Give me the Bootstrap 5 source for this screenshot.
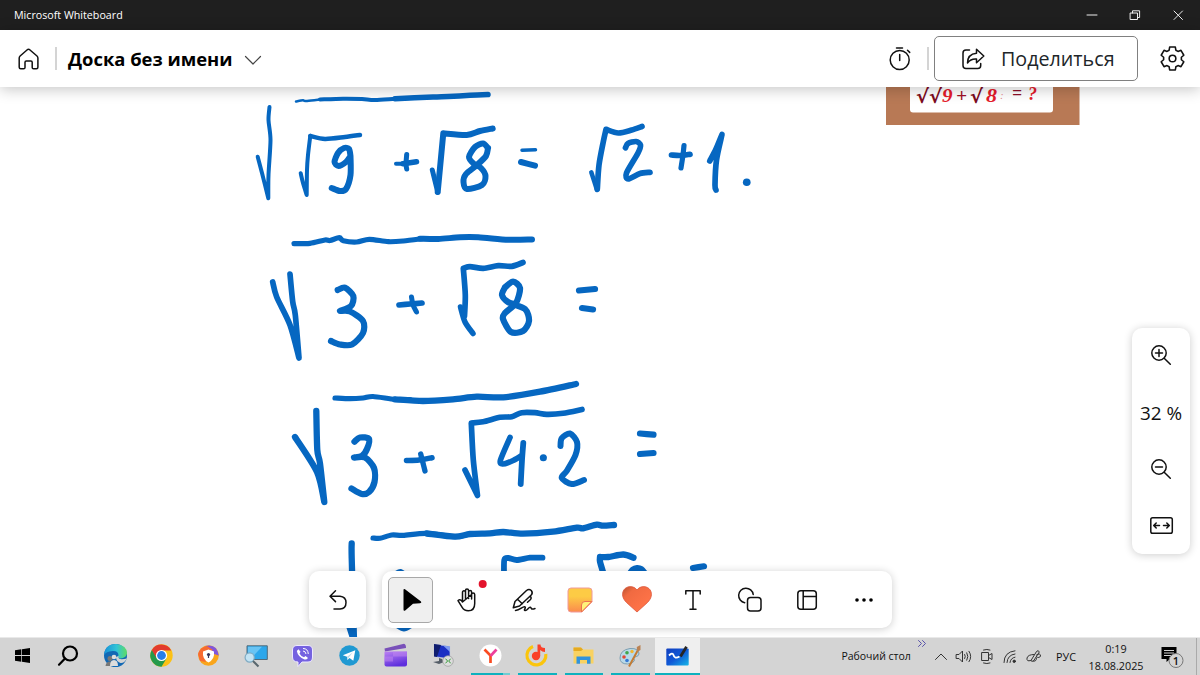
<!DOCTYPE html>
<html lang="ru">
<head>
    <meta charset="UTF-8">
    <meta name="viewport" content="width=device-width, initial-scale=1.0">
    <title>Microsoft Whiteboard</title>

    <!-- Bootstrap CSS -->
    <link rel="stylesheet" href="https://cdn.jsdelivr.net/npm/bootstrap@5.3.0/dist/css/bootstrap.min.css">

    <style>
        body {
            height: 100vh;
            font-family: "Segoe UI", "Open Sans", "Noto Sans", sans-serif;
            color: #111;
            background: #fff;
        }

        svg {
            display: block;
            flex: none;
            overflow: visible;
        }

        .ico {
            fill: none;
            stroke: #111;
            stroke-width: 1.5;
            stroke-linecap: round;
            stroke-linejoin: round;
        }

        .ico-heavy {
            stroke: #000;
            stroke-width: 2.2;
        }

        .title-bar {
            height: 30px;
            background: #1f1f1f;
            color: #fff;
            font-size: 10.7px;
            padding: 0 17px 0 14px;
        }

        .title-bar .ico {
            stroke: #eee;
            stroke-width: 1;
        }

        .win-buttons {
            gap: 33px;
        }

        .board-header {
            height: 57px;
            background: #fff;
            padding: 0 15px 0 18px;
            box-shadow: 0 2px 14px rgba(0, 0, 0, 0.24);
            z-index: 2;
        }

        .divider {
            width: 2px;
            height: 23px;
            background: #d4d4d4;
        }

        .divider-left {
            margin-left: 15px;
        }

        .board-name {
            font-size: 18.4px;
            font-weight: 700;
            color: #000;
            margin: 0 12px 0 11px;
            width: 165px;
            white-space: nowrap;
        }

        .header-caret {
            stroke: #444;
            stroke-width: 1.2;
        }

        .btn-share {
            width: 204px;
            height: 45px;
            border: 1px solid #808080;
            border-radius: 5px;
            font-size: 19.7px;
            padding: 0 0 0 26px;
            margin: 0 22px 0 5px;
            gap: 16px;
        }

        .panel {
            background: #fff;
            border-radius: 10px;
            box-shadow: 0 1px 8px rgba(0, 0, 0, 0.2);
        }

        .tools {
            left: 309px;
            bottom: 9px;
            height: 57px;
            gap: 16px;
        }

        .undo-panel {
            width: 57px;
        }

        .tool-panel {
            width: 510px;
        }

        .tool {
            flex: 1 1 0;
            display: flex;
            align-items: center;
            justify-content: center;
        }

        .tool-active {
            width: 45px;
            height: 46px;
            padding-left: 4px;
            background: #efefef;
            border: 1px solid #a8a8a8;
            border-radius: 5px;
        }

        .zoom-panel {
            right: 10px;
            top: 241px;
            width: 58px;
            height: 226px;
            padding-top: 17px;
            font-size: 18.9px;
            line-height: 27px;
        }

        .zoom-value {
            margin: 35px 0 32px;
        }

        .zoom-fit {
            margin-top: 38px;
        }

        .task-bar {
            height: 38px;
            background: #d4d4d4;
            border-top: 1px solid #e9e9e9;
        }

        .app {
            width: 46.9px;
            display: flex;
            align-items: center;
            justify-content: center;
            border-bottom: 2px solid transparent;
        }

        .app-sys {
            width: 45.8px;
        }

        .app-open {
            position: relative;
        }

        .app-open::after {
            content: "";
            position: absolute;
            left: 4px;
            right: 4px;
            bottom: -2px;
            height: 2px;
            background: #0fb1be;
        }

        .app-multi::after {
            background: linear-gradient(90deg, #0fb1be 81%, #6fcdd3 81%);
        }

        .app-current {
            background: #efefef;
            width: 45px;
            margin-left: 1px;
        }

        .app-current::after {
            left: 0;
            right: 0;
        }

        .tray {
            font-size: 10.8px;
            line-height: 17px;
        }

        .tray .ico {
            stroke: #333;
            stroke-width: 1;
        }

        .tray .tray-more {
            stroke: #5953ab;
            margin: 0 8px 26px 6px;
        }

        .tray-icons {
            gap: 9.3px;
        }

        .desk-label {
            font-size: 10.5px;
        }

        .lang {
            font-size: 10.8px;
            margin-left: 14px;
        }

        .clock {
            width: 56px;
            margin: 0 17px 0 12px;
        }

        .tray-edge {
            width: 1px;
            margin: 0 3px 0 11px;
            background: #aaa;
        }

        .ink {
            fill: none;
            stroke: #0667c1;
            stroke-linecap: round;
            stroke-linejoin: round;
        }
    </style>
</head>
<body class="d-flex flex-column overflow-hidden m-0">

    <!-- Window title -->
    <div class="title-bar d-flex align-items-center justify-content-between">
        <span>Microsoft Whiteboard</span>
        <div class="win-buttons d-flex align-items-center">
            <svg class="ico" width="10" height="10"><path d="M0 5H10"/></svg>
            <svg class="ico" width="10" height="10"><path d="M.5 3H7.500V9.500H.5ZM2.500 3V.8H9.600V7.500H7.500"/></svg>
            <svg class="ico" width="10" height="10"><path d="M1 1 9.500 9.500M9.500 1 1 9.500"/></svg>
        </div>
    </div>

    <!-- Board header -->
    <header class="board-header d-flex align-items-center position-relative">
        <svg class="ico" width="22" height="22"><path d="M1.200 10Q1.200 8.800 2.100 8L9.300 1.700Q10.500.8 11.700 1.700L19 8Q19.900 8.800 19.900 10V19.300Q19.900 20.800 18.400 20.800H15.600Q14.200 20.800 14.200 19.400V14.300Q14.200 13 12.900 13H8.300Q7 13 7 14.300V19.400Q7 20.800 5.600 20.800H2.700Q1.200 20.800 1.200 19.300Z"/></svg>
        <div class="divider divider-left"></div>
        <div class="board-name">Доска без имени</div>
        <svg class="ico header-caret mt-1" width="16" height="9"><path d="M.5.5 8 8 15.500.5"/></svg>
        <div class="ms-auto d-flex align-items-center">
            <svg class="ico" width="22" height="24"><circle cx="10.700" cy="13" r="9.500"/><path d="M10.700 7.500V13.500M7.500 1H13.500M18.500 3.200 20.700 5.400"/></svg>
            <div class="divider ms-3"></div>
            <button type="button" class="btn-share btn d-flex align-items-center">
                <svg class="ico" width="24" height="22"><path d="M8.500 2H5Q2 2 2 5V17.500Q2 20.500 5 20.500H16.700Q19.700 20.500 19.700 17.500V15.500M15.500 1.300 22.800 8 15.500 14.700V11Q9.800 10.500 6.500 15 6.500 6 15.500 5.200Z"/></svg>
                <span>Поделиться</span>
            </button>
            <svg class="ico" width="25" height="25" viewBox="0 0 24 24"><path d="M9.270 1.040H14.730L15.220 4.030 17.290 5.220 20.130 4.150 22.860 8.890 20.520 10.800V13.200L22.860 15.110 20.130 19.850 17.290 18.780 15.220 19.970 14.730 22.960H9.270L8.780 19.970 6.710 18.780 3.870 19.850 1.140 15.110 3.480 13.200V10.800L1.140 8.890 3.870 4.150 6.710 5.220 8.780 4.030Z"/><circle cx="12" cy="12" r="3.200"/></svg>
        </div>
    </header>

    <!-- Canvas with floating panels -->
    <main class="flex-grow-1 position-relative overflow-hidden">
        <svg width="1200" height="550" viewBox="0 87 1200 550">
            <!-- picture pasted on the board -->
            <rect x="886" y="60" width="193.500" height="65" fill="#b87955"/>
            <rect x="910" y="60" width="143" height="52.500" rx="3" fill="#fff"/>
            <g font-family="'Liberation Serif', serif" font-size="19" font-weight="bold" font-style="italic" fill="#e51c2c">
                <text x="916" y="103" fill="#7d0c22" font-family="DejaVu Sans" textLength="26" lengthAdjust="spacingAndGlyphs">√√</text>
                <text x="942" y="102" textLength="10.500" lengthAdjust="spacingAndGlyphs">9</text>
                <text x="956" y="102" fill="#a01028" textLength="11" lengthAdjust="spacingAndGlyphs">+</text>
                <text x="970" y="103" fill="#7d0c22" font-family="DejaVu Sans" textLength="13" lengthAdjust="spacingAndGlyphs">√</text>
                <text x="986" y="102" textLength="11" lengthAdjust="spacingAndGlyphs">8</text>
                <text x="1000" y="99" font-size="11" fill="#e58a90" font-weight="normal">:</text>
                <text x="1012" y="99" fill="#8d1028" textLength="10" lengthAdjust="spacingAndGlyphs">=</text>
                <text x="1028" y="100" textLength="9" lengthAdjust="spacingAndGlyphs">?</text>
            </g>
            <g id="ink" class="ink"></g>
        </svg>

        <div class="tools position-absolute d-flex">
            <div class="undo-panel panel d-flex align-items-center justify-content-center">
                <svg class="ico" width="18" height="20"><path d="M6.500.8 1 6.200 6.500 11.600M1.500 6.200H11Q17 6.800 17 12.500 17 18.800 11 19H5"/></svg>
            </div>
            <div class="tool-panel panel d-flex">
                <div class="tool">
                    <div class="tool-active d-flex align-items-center justify-content-center">
                        <svg width="18" height="24"><path d="M.5 2Q.5.300 2 1.200L18 13.500Q19 15 17 15.200L10 15.800 2.200 22.500Q.5 23.500.5 21.500Z"/></svg>
                    </div>
                </div>
                <div class="tool">
                    <svg class="ico" width="20" height="24"><path d="M5.500 12.500V4.300Q5.500 2.800 7 2.800T8.500 4.300V10.500M8.500 10V2.600Q8.500 1 10 1T11.600 2.600V10.500M11.600 4Q11.600 2.500 13.100 2.500T14.600 4V11M14.600 6.500Q14.600 5 16.100 5T17.700 6.500V15.500Q17.700 22.800 11.300 22.800 7 22.800 5 19.200L1 12.700Q2.200 10.800 4.300 12.400L5.500 14Z"/><circle cx="25.700" cy="-4" r="4" fill="#e3132c" stroke="none"/></svg>
                </div>
                <div class="tool">
                    <svg class="ico" width="24" height="24"><path d="M1.300 19.700 3 13.500 14.500 2.500Q17 .5 19.300 2.500 21.300 5 19 7.300L7.500 18ZM5.500 11.200 10.300 15.800M18 8.500Q20.300 9.500 18 12L15.500 14.300M3.500 22.500C8 22.300 10 18.800 12.500 18.800 15 19.300 11 22 13 22.500 15.500 22.800 16.500 18.800 18.300 19.300 20 19.800 18.500 22.500 23 20.500"/></svg>
                </div>
                <div class="tool">
                    <svg width="26" height="26">
                        <defs>
                            <linearGradient id="note" x1="0" y1="0" x2="0" y2="1"><stop offset=".35" stop-color="#fdcb45"/><stop offset="1" stop-color="#fb8a4d"/></linearGradient>
                        </defs>
                        <path d="M4 1H22Q25 1 25 4V15L15 25H4Q1 25 1 22V4Q1 1 4 1Z" fill="url(#note)" stroke="#ef9a9c"/>
                        <path d="M24.800 14.500H18Q14.500 14.500 14.500 18V25Z" fill="#fff27a" stroke="#ec7350"/>
                    </svg>
                </div>
                <div class="tool">
                    <svg width="31" height="27">
                        <defs>
                            <linearGradient id="heart" x1="0" y1="0" x2=".7" y2=".7"><stop offset="0" stop-color="#b5502f"/><stop offset=".35" stop-color="#f06a41"/><stop offset="1" stop-color="#fd7247"/></linearGradient>
                        </defs>
                        <path d="M15 4C18.500-.8 25.500-.2 28.200 4 30.700 8.300 29.300 12.500 25.500 16.500L15 26 4.500 16.500C.7 12.500-.7 8.300 1.800 4 4.500-.2 11.500-.8 15 4Z" fill="url(#heart)" stroke="#dc573c" stroke-width=".8"/>
                    </svg>
                </div>
                <div class="tool">
                    <svg class="ico" width="18" height="20"><path d="M.8 4V.8H15.200V4M8 .8V19M5 19.200H11"/></svg>
                </div>
                <div class="tool">
                    <svg class="ico" width="24" height="24"><path d="M6.700 14.700A7.300 7.300 0 1 1 15.200 6.500"/><rect x="9.500" y="9.500" width="13.500" height="13.500" rx="3"/></svg>
                </div>
                <div class="tool">
                    <svg class="ico" width="20" height="20"><rect x=".8" y=".8" width="18.500" height="18.500" rx="3"/><path d="M6.200.8V19.200M6.200 6.500H19.200"/></svg>
                </div>
                <div class="tool">
                    <svg width="18" height="4"><circle cx="2" cy="2" r="1.800"/><circle cx="9" cy="2" r="1.800"/><circle cx="16" cy="2" r="1.800"/></svg>
                </div>
            </div>
        </div>

        <div class="zoom-panel panel position-absolute d-flex flex-column align-items-center">
            <svg class="ico" width="20" height="20"><circle cx="8" cy="8" r="7.200"/><path d="M13.200 13.200 19.300 19.300M4.500 8H11.500M8 4.500V11.500"/></svg>
            <span class="zoom-value text-nowrap">32 %</span>
            <svg class="ico" width="20" height="20"><circle cx="8" cy="8" r="7.200"/><path d="M13.200 13.200 19.300 19.300M4.500 8H11.500"/></svg>
            <svg class="ico zoom-fit" width="23" height="17"><rect x=".8" y=".8" width="21.500" height="15.500" rx="1.800"/><path d="M9.500 8.500H4M6.200 6 3.700 8.500 6.200 11M13.500 8.500H19M16.800 6 19.300 8.500 16.800 11"/></svg>
        </div>
    </main>

    <!-- Taskbar -->
    <footer class="task-bar d-flex">
        <div class="app app-sys"><svg width="15" height="15"><path d="M0 2.200 6.300 1.300V7.100H0ZM7 1.200 15 0V7.100H7ZM0 7.900H6.300V13.700L0 12.800ZM7 7.900H15V15L7 13.800Z"/></svg></div>
        <div class="app app-sys"><svg class="ico ico-heavy" width="21" height="21"><circle cx="12" cy="8.500" r="7"/><path d="M7 13.500 1 19.700"/></svg></div>

        <div class="app">
            <svg width="23" height="23">
                <defs>
                    <linearGradient id="edge"><stop offset="0" stop-color="#1791d8"/><stop offset=".55" stop-color="#32c4d6"/><stop offset="1" stop-color="#5fdc62"/></linearGradient>
                </defs>
                <circle cx="11.500" cy="11.500" r="11.500" fill="#1268b4"/>
                <path d="M0 11Q1 0 12 0 23 1 23 9.500 22 14 16.500 14.500 13 14 14.500 11 14 6.500 8.500 7 2 7.500 0 11Z" fill="url(#edge)"/>
                <path d="M14.500 12Q13.500 17 23 14.500 20 19.500 16.500 19 12 17.500 12 13Z" fill="#d4d4d4"/>
                <circle cx="6" cy="14.500" r="2.500" fill="#777"/><path d="M1.500 22Q2 17.500 6 17.500T10.500 22Z" fill="#777"/>
                <circle cx="10" cy="13" r="2.300" fill="#ddd"/><path d="M6 22Q6 16 10 16T14 22Z" fill="#ddd"/>
            </svg>
        </div>
        <div class="app">
            <svg width="23" height="23">
                <circle cx="11.500" cy="11.500" r="11.200" fill="#fbc116"/>
                <path d="M11.500 11.500 1.800 5.900A11.200 11.200 0 0 0 11.500 22.700L16.500 14.500Z" fill="#24994b"/>
                <path d="M1.800 5.900A11.200 11.200 0 0 1 21.200 6.400H11.500L6.500 14Z" fill="#e23b2e"/>
                <circle cx="11.500" cy="11.500" r="5.600" fill="#fff"/><circle cx="11.500" cy="11.500" r="4.400" fill="#277ee8"/>
            </svg>
        </div>
        <div class="app">
            <svg width="21" height="21">
                <circle cx="10.500" cy="10.500" r="10.300" fill="#f9a51b"/>
                <path d="M7 1Q19-2 20.800 10.500L16 9Q14 4 7 1Z" fill="#8056dc"/>
                <path d="M0 9Q2 2 9 1L15 5 5 9 8 17 2 16Z" fill="#f76b32"/>
                <path d="M10.500 4.500 16 6.500Q17 14 10.500 17.500 4 14 5 6.500Z" fill="#fff"/>
                <circle cx="10.500" cy="9.500" r="1.600" fill="#35345b"/><path d="M9.900 9.500H11.100V13H9.900Z" fill="#35345b"/>
            </svg>
        </div>
        <div class="app">
            <svg width="24" height="22">
                <path d="M3 .8H23.300V14.500H3Z" fill="#2ca7eb" stroke="#536b7a"/><path d="M4 1.800H18L7 13.500H4Z" fill="#68c4f4"/>
                <circle cx="5.700" cy="12.500" r="4.600" fill="#c3e3f3" stroke="#7eabc4" stroke-width="1.200"/><path d="M9 16 14.500 21.500" stroke="#59676e" stroke-width="2"/>
            </svg>
        </div>
        <div class="app">
            <svg width="21" height="22">
                <path d="M5 .5H16Q20.500.5 20.500 5V12Q20.500 17 16 17H10L6 21.500V17Q.5 17 .5 12V5Q.5.500 5 .5Z" fill="#7562e0" stroke="#eee9ff"/>
                <path d="M6.500 4.200 8.500 6.700 7.500 8.500Q9 11.500 12 12.300L13.500 11 16 13Q14.500 15 12.500 14.500 6 12 4.800 6Z" fill="#fff"/>
                <path d="M11 3.500Q16 3.500 16.300 9M11 6Q13.500 6 14 9" fill="none" stroke="#fff"/>
            </svg>
        </div>
        <div class="app">
            <svg width="21" height="21"><circle cx="10.500" cy="10.500" r="10.200" fill="#2099d2"/><path d="M3.800 10.200 16.300 5.300 14.300 15.800 10.500 13 8.500 15 8 11.800Z" fill="#fff"/><path d="M8 11.800 14 7.300 9.700 12.400 8.500 15Z" fill="#b4dbec"/></svg>
        </div>
        <div class="app">
            <svg width="24" height="23">
                <defs>
                    <linearGradient id="clip" x1="0" y1="0" x2=".4" y2="1"><stop offset="0" stop-color="#bd82f2"/><stop offset="1" stop-color="#5f2fdd"/></linearGradient>
                </defs>
                <path d="M.5 4.500 20-.3Q22 0 22 4L1 7.500Z" fill="#7950b9"/>
                <path d="M.5 7.500H23V20.500Q23 22.500 21 22.500H2.500Q.5 22.500.5 20.500Z" fill="url(#clip)"/><path d="M9 7.500H23V12.500H9ZM.5 12.500H9V17.500H.5Z" fill="#c288f0" opacity=".5"/>
            </svg>
        </div>
        <div class="app">
            <svg width="22" height="23">
                <path d="M2 0 18 2.500V15L2 12.500Z" fill="#1b30c4" stroke="#c8cdd9" stroke-width=".7"/><path d="M2 0 9 1 5 13 2 12.500Z" fill="#101d6e"/><path d="M11 1.500 18 2.500V8Z" fill="#7e9bf0"/>
                <path d="M7 14V17L1 18 7 20 12 18 10 15Z" fill="#545d67"/>
                <circle cx="16" cy="17" r="5.300" fill="#ddd" stroke="#999" stroke-width=".7"/><path d="M13.500 14.700 15.600 17 13.500 19.300M18.700 14.700 16.700 17 18.700 19.300" fill="none" stroke="#349b37"/>
            </svg>
        </div>
        <div class="app app-open app-multi">
            <svg width="23" height="23"><circle cx="11.500" cy="11.500" r="11" fill="#fff"/><path d="M5.500 5.500 11.500 11.500V19" fill="none" stroke="#fa4b21" stroke-width="2.700"/><path d="M11.500 12 17.500 5.500" stroke="#ed3f9b" stroke-width="2.700"/></svg>
        </div>
        <div class="app app-open">
            <svg width="24" height="23"><path d="M8 2.500A9.500 9.500 0 1 0 20.800 10" fill="none" stroke="#fbc50c" stroke-width="3.200"/><circle cx="11" cy="12" r="4.200" fill="#fa4029"/><path d="M12.500 12V.5H15.500Q15.500 4 20 4V8Q17 8 15.200 6V12Z" fill="#fa4029"/></svg>
        </div>
        <div class="app app-open">
            <svg width="21" height="17"><path d="M.5.5H8L10 2.500H20.500V16.500H.5Z" fill="#f9d261"/><path d="M.5.500H8L10 2.500 8 4H.5Z" fill="#e5aa21"/><path d="M3.500 9.500H17.500V16.800H14V13H7V16.800H3.500Z" fill="#3293dc"/></svg>
        </div>
        <div class="app app-open">
            <svg width="23" height="22">
                <path d="M1 13Q1 5 11 3.500 20 3 20 9 20 11 16 12 14 13 15.500 15.500 14 19 8.500 19 1 19 1 13Z" fill="#b9d9e8" stroke="#7c9fb2"/>
                <circle cx="5" cy="12" r="1.800" fill="#e34735"/><circle cx="8" cy="7.800" r="1.800" fill="#40a64c"/><circle cx="13" cy="6.500" r="1.700" fill="#f1b731"/><circle cx="8" cy="15.500" r="1.800" fill="#3479d6"/>
                <path d="M19.500 4 10 21.500" stroke="#c47b33" stroke-width="2"/><path d="M18 7 17.800 2 21.500 0V5Z" fill="#ba8152"/>
            </svg>
        </div>
        <div class="app app-open app-current">
            <svg width="23" height="20">
                <defs>
                    <linearGradient id="board" x1="0" y1="0" x2="1" y2="1"><stop offset="0" stop-color="#1240bf"/><stop offset=".5" stop-color="#1058d6"/><stop offset="1" stop-color="#16b7e8"/></linearGradient>
                </defs>
                <rect x=".3" y="2.500" width="22.400" height="17" rx="1" fill="url(#board)"/><path d="M3 9.500Q6.500 6 7.500 9 8.500 13.500 13.500 10.500" fill="none" stroke="#fff" stroke-width="1.800"/><path d="M14.500 10.500 20.500.8" stroke="#252525" stroke-width="2.800"/>
            </svg>
        </div>

        <div class="tray ms-auto d-flex align-items-center">
            <span class="desk-label text-nowrap">Рабочий стол</span>
            <svg class="ico tray-more" width="10" height="7"><path d="M1.500.5 4.500 3.500 1.500 6.500M5.500.5 8.500 3.500 5.500 6.500"/></svg>
            <div class="tray-icons d-flex align-items-center">
                <svg class="ico" width="12" height="7"><path d="M.5 6.500 6 1 11.500 6.500"/></svg>
                <svg class="ico" width="16" height="13"><path d="M.5 4.500H3L6.500 1V12L3 8.500H.5ZM8.700 4.500Q10 6.500 8.700 8.500M10.800 2.800Q13 6.500 10.800 10.200M13 1.300Q16.500 6.500 13 11.700"/></svg>
                <svg class="ico" width="12" height="15"><path d="M1 3.500H7.500V11.500H1ZM7.500 6.500 11 4.500V10.500L7.500 8.500M2.500 1Q6-.2 9 1M2.500 14Q6 15.200 9 14"/></svg>
                <svg class="ico" width="14" height="13"><path d="M1 12.500Q1 2 12 .8M4 12.500Q4.500 5 12 4M7 12.500Q7.500 8 12 7.200"/><circle cx="11.200" cy="11.300" r="1.200" fill="#333"/></svg>
                <svg class="ico" width="16" height="13"><path d="M5 10.500 10.500 1.500Q12.500-.5 13.300 2L7.500 11ZM8 4.500Q2 4.500 1 8 .5 12 4.500 10.500M7.500 11Q10 12 10.500 8.500M10.500 5Q14.500 2.500 14.500 6 13.500 8.500 10.500 7"/></svg>
            </div>
            <span class="lang">РУС</span>
            <div class="clock text-center">0:19<br>18.08.2025</div>
            <svg width="24" height="22"><path d="M.5 1H15.500V13H9L5.500 16V13H.5Z"/><path d="M3 4.500H13M3 7H13M3 9.500H10" stroke="#d4d4d4"/><circle cx="15" cy="14.500" r="7" fill="#d4d4d4" stroke="#777"/><text x="15" y="18.500" font-size="11" font-weight="600" text-anchor="middle" fill="#111">1</text></svg>
            <div class="tray-edge align-self-stretch"></div>
        </div>
    </footer>

    <script src="https://cdn.jsdelivr.net/npm/bootstrap@5.3.0/dist/js/bootstrap.bundle.min.js"></script>

    <script>
        // Pen strokes: width first, then x,y pairs; a repeated point makes a sharp corner
        const strokes = [
            // line 1
            [2.5, "296,101.5 303,100.3 306,101 325,99.3 343,98.7 362,99 375,100"],
            [4, "320,99.5 343,98.7 362,99 375,100 400,98.5 433,97 450,97"],
            [5.5, "395,98.7 433,97 448,96.5 470,95.3 488,94.5"],
            [4, "257.7,156.7 262,173 268.3,198.3 268.3,198.3 268.5,175 270.5,140 268.5,120 269.5,107"],
            [4, "300.7,173.3 303,183 306.7,195 306.7,195 307,170 308,155 310.3,135.7 310.3,135.7"],
            [4.5, "310.3,136 325,139 345,137 360,135"],
            [6, "350.5,156 349,149 344,148 338,153 334.5,162 338.5,166 346,162 350.5,156 350.5,156 350.5,175 346,189 340,191 331.7,188"],
            [4, "396,163.7 406,163.5 416.5,161.7"],
            [5.5, "403,163.8 416.5,161.7"],
            [5, "406.7,154.5 406,164 406.7,169"],
            [5, "432.3,170 437.7,192 437.7,192"],
            [6, "437.7,192 440,168 443.3,133.3 443.3,133.3 466.7,135 480,131 492.7,128.5"],
            [6, "488,148 483,143.5 475,147 469,157 474,164 481,168 485.5,176 482,185 467,189 463.5,182 466,174 477,165 486,156 488,148"],
            [3.5, "522,150.3 535.5,149.8"],
            [6, "521,162 535,165.7"],
            [4.5, "591.3,172.3 597,190 597,190"],
            [5.7, "597.3,189 599,165 603.3,141.7 606,129.3 606,129.3 618.3,133 631.7,130 642,126.500"],
            [5.7, "625.5,147.7 628,143.5 636,141.5 640.5,145 638,153 626.5,173 628.3,179 640,173.5 650,172.3"],
            [5.7, "671.5,155 680,155.5 690,154.3"],
            [5.2, "684,145.5 683,155 681,168"],
            [5.7, "709.8,161 716,149 722,134.5 722,134.5 716.5,160 715,185 716,190"],
            [7.6, "746.7,182.3 746.8,182.3"],
            // line 2
            [5.2, "294,243.7 310,243.3 325,240 330,240.5 339.3,237.7 343.3,240.7 356.7,242 369.3,239.3 388.3,241.7 403.3,241 423.3,238.5"],
            [6, "420,238.7 438.3,239 460,237.3 478.3,237.3 508.3,239.7 532,239.5"],
            [5.7, "272.7,282 276.7,297 290,325 299,358 299,358 295.3,315 292.7,301.7 290,274"],
            [6.2, "337.7,290 345,287.7 353.3,296 351,306 340,311 340,311 350,311.5 363,321 363,333 352,344.5 340,344.5 331,341"],
            [5.7, "399,305 410,304 422,303"],
            [5, "411.5,297 413,305 416.5,312"],
            [5.5, "460.5,307 465,322 473,333.5"],
            [5.7, "464.5,316 465.3,295 463.3,268.3 463.3,268.3 470,266.7 483.3,268.3 498.3,265.7 511.7,266.3 523,262.5"],
            [6.2, "505,287.3 513,281.7 520,288 516,303 505,313 503,319 511,332 523,331 529,321 525,309 508,302 502,295 505,287.3"],
            [6.2, "579,290.5 595,289"],
            [6.2, "582,308 593,309.5"],
            // line 3
            [5.2, "335,398 350,398.7 363,398 373,396.5 395,399.3 410,399.5"],
            [6.3, "395,399.3 423,401 453,399.3 476.7,396.7 503.3,397.3 540,391.7 576,384"],
            [6.3, "295,437 317,472 324.3,502 324.3,502 320,463.3 317.3,450 316.3,411"],
            [6.3, "354.5,441.7 360,437.5 369,439 367,449 362,456 354,457.5 354,457.5 365,457.5 374,468 374.5,482 369,492 361.7,494 351.500,488.5"],
            [5.5, "406.5,460.5 419,460 432,457.7"],
            [5.3, "420.7,454 423,463 425,471"],
            [5.7, "465,470 477.5,495.500 477.5,495.5 473.3,460 471.3,423 471.3,423 483,421.7 500,417.3 511.7,416.7 521.7,412.7 535,412.7 546.7,414.3 563,413.3 582,409.5"],
            [5.7, "510,437.5 500.5,460 502.7,464 512,461 521,456"],
            [5.8, "523.3,443 522,460 520.7,484"],
            [7, "543.3,457.7 543.4,457.7"],
            [6, "560.5,446 561.7,438.3 570,433.5 577,442 575.500,455 566.7,471 561.7,478 571.7,484 584,480"],
            [6.2, "640,433.5 653.5,434.7"],
            [6.2, "640,454 653.5,453"],
            // line 4
            [5.2, "373,538 380,538.3 391.7,535 403,535.3 426.7,533.3 455,536.7 470,534"],
            [6.3, "426.7,533.5 455,536.7 470,534 490,533.3 503.3,532 523,533.7 553,531.7 576.7,527.7 583,528.3 596.7,524.7 603,525.7 614,525"],
            [6.3, "351.7,543.5 351.7,558 354,640"],
            [7, "346,615 354,640"],
            [6, "396,574 400.500,572 406,576"],
            [6, "397,625 404,628.5 411,625"],
            [5.8, "504,575 504.3,560 508.3,558 516.7,560 530,557.7 542.5,557.7"],
            [6.3, "603.3,573 600,561.7 600,557 600,557 608.3,557 623.3,554.5 633.5,557.7"],
            [7, "630,574 633,570 637,568.5 641,569.5 645,574"],
            [6.2, "693,568 704,566.3"]
        ];

        function strokePath(text) {
            const p = text.split(" ").map(pair => pair.split(",").map(Number));
            let d = `M${p[0]}`;
            for (let i = 0; i < p.length - 1; i++) {
                const a = p[i - 1] || p[i];
                const b = p[i];
                const c = p[i + 1];
                const e = p[i + 2] || c;
                if (b[0] === c[0] && b[1] === c[1]) continue;
                d += `C${b[0] + (c[0] - a[0]) / 7},${b[1] + (c[1] - a[1]) / 7} ${c[0] - (e[0] - b[0]) / 7},${c[1] - (e[1] - b[1]) / 7} ${c}`;
            }
            return d;
        }

        document.getElementById("ink").innerHTML = strokes
            .map(([width, points]) => `<path d="${strokePath(points)}" stroke-width="${width}"/>`)
            .join("");
    </script>

</body>
</html>
